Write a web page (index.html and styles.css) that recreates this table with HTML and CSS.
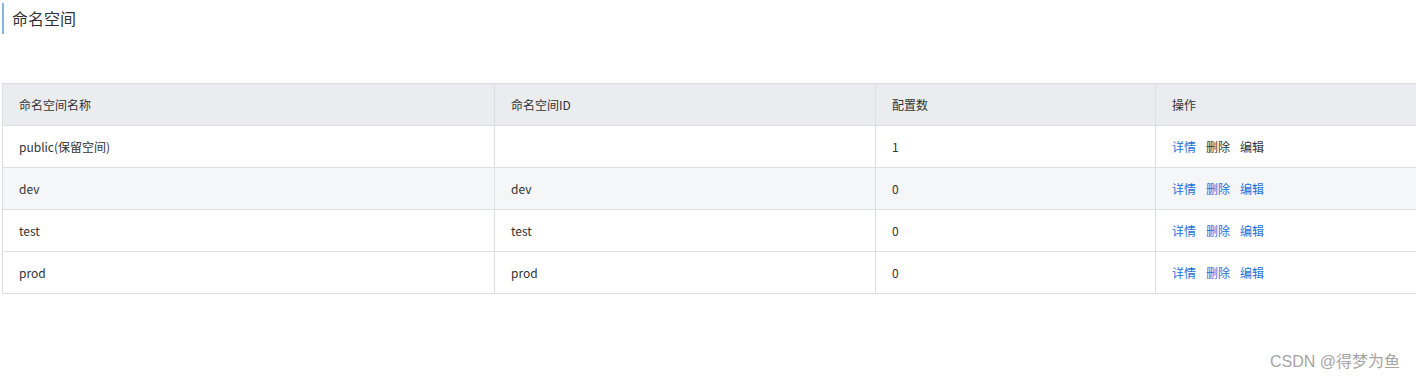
FILE: index.html
```html
<!DOCTYPE html>
<html lang="zh-CN">
<head>
<meta charset="utf-8">
<title>命名空间</title>
<link rel="stylesheet" href="styles.css">
</head>
<body>
<div class="page">
  <h1 class="page-title">命名空间</h1>
  <div class="table-wrap">
  <table class="ns-table">
    <colgroup>
      <col class="c1"><col class="c2"><col class="c3"><col class="c4">
    </colgroup>
    <thead>
      <tr><th>命名空间名称</th><th>命名空间ID</th><th>配置数</th><th>操作</th></tr>
    </thead>
    <tbody>
      <tr>
        <td>public(保留空间)</td><td></td><td>1</td>
        <td><div class="actions"><span class="link">详情</span><span class="muted">删除</span><span class="muted">编辑</span></div></td>
      </tr>
      <tr class="alt">
        <td>dev</td><td>dev</td><td>0</td>
        <td><div class="actions"><span class="link">详情</span><span class="link">删除</span><span class="link">编辑</span></div></td>
      </tr>
      <tr>
        <td>test</td><td>test</td><td>0</td>
        <td><div class="actions"><span class="link">详情</span><span class="link">删除</span><span class="link">编辑</span></div></td>
      </tr>
      <tr>
        <td>prod</td><td>prod</td><td>0</td>
        <td><div class="actions"><span class="link">详情</span><span class="link">删除</span><span class="link">编辑</span></div></td>
      </tr>
    </tbody>
  </table>
  </div>
</div>
<div class="watermark">CSDN @得梦为鱼</div>
</body>
</html>
```

FILE: styles.css
```css
html, body {
  margin: 0;
  padding: 0;
  overflow: hidden;
  background: #fff;
}
body {
  font-family: "Noto Sans CJK SC", "Noto Sans", sans-serif;
  color: #333;
  width: 1416px;
  height: 382px;
  position: relative;
}
.page {
  padding: 3px 0 0 2px;
}
.page-title {
  margin: 0;
  font-size: 16px;
  font-weight: normal;
  line-height: 31px;
  height: 31px;
  border-left: 2px solid #88b5e0;
  padding-left: 8px;
  color: #333;
}
.table-wrap {
  margin-top: 49px;
  overflow: hidden;
}
.ns-table {
  border-collapse: collapse;
  table-layout: fixed;
  width: 1500px;
  font-size: 12px;
}
.c1 { width: 492px; }
.c2 { width: 381px; }
.c3 { width: 280px; }
.c4 { width: 347px; }
.ns-table th,
.ns-table td {
  border: 1px solid #dcdee3;
  padding: 0 16px;
  height: 41px;
  text-align: left;
  font-weight: normal;
  line-height: 16px;
  vertical-align: middle;
}
.ns-table th {
  background: #ebecf0;
}
.ns-table tr.alt td {
  background: #f5f6f8;
}
.actions {
  display: flex;
  gap: 10px;
}
.link { color: #1f6fd8; }
.muted { color: #333; }
.watermark {
  position: absolute;
  right: 16px;
  bottom: 10px;
  font-size: 16px;
  color: #a5a5a5;
  font-family: "Liberation Sans", "Noto Sans CJK SC", sans-serif;
}
```
